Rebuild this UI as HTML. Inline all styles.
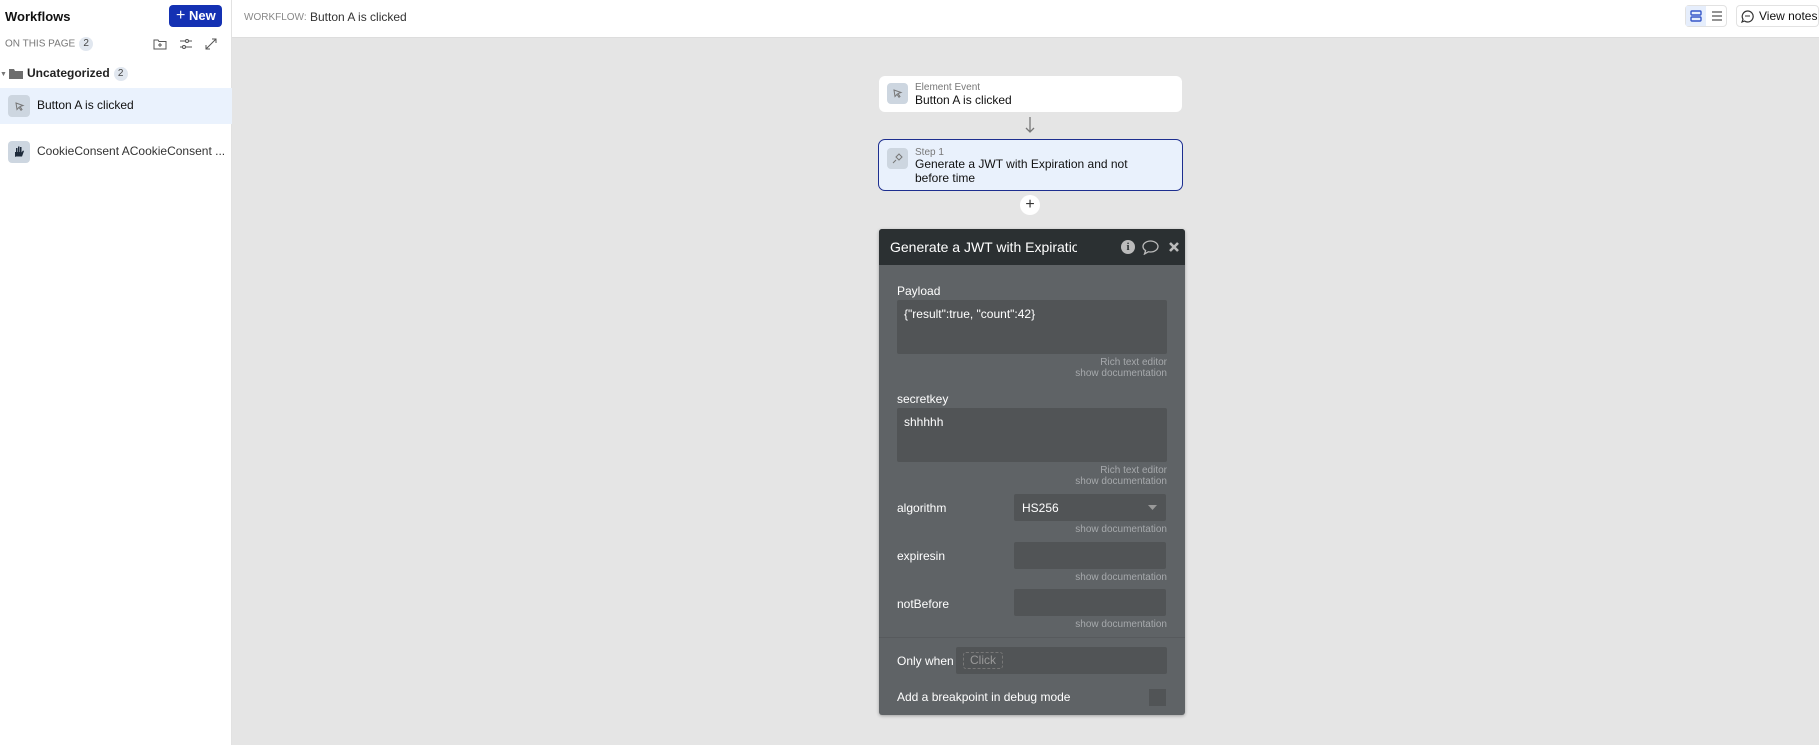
<!DOCTYPE html>
<html><head><meta charset="utf-8"><style>
*{box-sizing:border-box;margin:0;padding:0}
body{width:1819px;height:745px;overflow:hidden;font-family:"Liberation Sans",sans-serif;background:#e5e5e5;position:relative;color:#1a1a1a}
.a{position:absolute}
.side{left:0;top:0;width:232px;height:745px;background:#fff;border-right:1px solid #e2e2e2}
.top{left:232px;top:0;right:0;height:38px;background:#fff;border-bottom:1px solid #ddd}
.ib{background:#cdd6e0;border-radius:4px}
.lbl{color:#fff;font-size:12px}
.doc{color:#a6a9ac;font-size:10px;text-align:right;width:270px;left:897px}
.inp{background:#515456;border-radius:2px}
.bd{display:inline-block;width:14px;height:14px;border-radius:7px;background:#e1e7ef;font-size:10px;text-align:center;line-height:14px;color:#444;font-weight:normal;margin-left:4px;vertical-align:middle}
</style></head><body>
<div class="a side"></div>
<div class="a top"></div>
<div class="a" style="left:5px;top:9px;font-size:13px;font-weight:bold;color:#111">Workflows</div>
<div class="a" style="left:169px;top:5px;width:53px;height:22px;background:#1431b3;border-radius:4px;color:#fff;font-size:13px;font-weight:bold;line-height:22px;padding-left:7px"><span style="font-weight:normal;font-size:16px">+</span> New</div>
<div class="a" style="left:5px;top:37px;font-size:10px;color:#777;line-height:14px">ON THIS PAGE<span class="bd">2</span></div>
<svg class="a" style="left:153px;top:38px" width="14" height="12"><path d="M1 2h4l1 1.5h7V11H1z" fill="none" stroke="#555"/><path d="M7 5v4M5 7h4" stroke="#555"/></svg>
<svg class="a" style="left:179px;top:38px" width="14" height="12"><path d="M1 3h12M1 9h12" stroke="#555"/><circle cx="8" cy="3" r="1.5" fill="#fff" stroke="#555"/><circle cx="5" cy="9" r="1.5" fill="#fff" stroke="#555"/></svg>
<svg class="a" style="left:205px;top:38px" width="12" height="12"><path d="M1 11L11 1M7 1h4v4M1 7v4h4" fill="none" stroke="#555"/></svg>
<div class="a" style="left:0;top:71px;font-size:7px;color:#777">▼</div>
<svg class="a" style="left:9px;top:68px" width="15" height="12"><path d="M0 1h5l1 2h8v8H0z" fill="#6e6e6e"/></svg>
<div class="a" style="left:27px;top:66px;font-size:12px;font-weight:bold;color:#222;line-height:14px">Uncategorized<span class="bd">2</span></div>
<div class="a" style="left:0;top:88px;width:232px;height:36px;background:#eaf2fd"></div>
<div class="a ib" style="left:8px;top:95px;width:22px;height:22px"><svg width="22" height="22"><path d="M8 8l7 2.5-3 1 2 3-1 .8-2-3-2 2.2z" fill="none" stroke="#777"/></svg></div>
<div class="a" style="left:37px;top:98px;font-size:12px;color:#111">Button A is clicked</div>
<div class="a ib" style="left:8px;top:141px;width:22px;height:22px"><svg width="22" height="22"><path d="M7 16v-5h1V7h1.5v4h.5V5.5h1.5V11h.5V6h1.5v5.5l1.5-2 1 .5-2 5.5H8z" fill="#1e2a3a"/></svg></div>
<div class="a" style="left:37px;top:144px;font-size:12px;color:#333">CookieConsent ACookieConsent ...</div>
<div class="a" style="left:244px;top:11px;font-size:10px;color:#888;line-height:14px">WORKFLOW:</div>
<div class="a" style="left:310px;top:9px;font-size:12px;color:#333;line-height:16px">Button A is clicked</div>
<div class="a" style="left:1685px;top:5px;width:42px;height:22px;border:1px solid #e2e2e2;border-radius:4px"></div>
<div class="a" style="left:1686px;top:6px;width:20px;height:20px;background:#e6eefc"></div>
<svg class="a" style="left:1690px;top:10px" width="12" height="12"><rect x="1" y="1" width="10" height="4" rx="1" fill="none" stroke="#3657c9" stroke-width="1.4"/><rect x="1" y="7" width="10" height="4" rx="1" fill="none" stroke="#3657c9" stroke-width="1.4"/></svg>
<svg class="a" style="left:1711px;top:10px" width="12" height="12"><path d="M1 2h10M1 6h10M1 10h10" stroke="#555" stroke-width="1.2"/></svg>
<div class="a" style="left:1736px;top:5px;width:83px;height:22px;border:1px solid #e2e2e2;border-radius:4px;font-size:12px;line-height:20px;padding-left:22px;color:#111;white-space:nowrap">View notes</div>
<svg class="a" style="left:1741px;top:10px" width="13" height="13"><path d="M6.5 1a5.5 5.5 0 1 1-3 10L1 12l1-2.7A5.5 5.5 0 0 1 6.5 1z" fill="none" stroke="#333" stroke-width="1.2"/><path d="M4 6h5" stroke="#333"/></svg>

<div class="a" style="left:879px;top:76px;width:303px;height:36px;background:#fff;border-radius:6px"></div>
<div class="a ib" style="left:887px;top:83px;width:21px;height:21px"><svg width="21" height="21"><path d="M7 7l7 2.5-3 1 2 3-1 .8-2-3-2 2.2z" fill="none" stroke="#777"/></svg></div>
<div class="a" style="left:915px;top:82px;font-size:10px;color:#777">Element Event</div>
<div class="a" style="left:915px;top:93px;font-size:12px;color:#111">Button A is clicked</div>
<svg class="a" style="left:1024px;top:117px" width="12" height="18"><path d="M6 0v15M2 11l4 4 4-4" fill="none" stroke="#777" stroke-width="1.3"/></svg>
<div class="a" style="left:878px;top:139px;width:305px;height:52px;background:#e9f1fc;border:1.5px solid #1d2e8f;border-radius:7px"></div>
<div class="a ib" style="left:887px;top:148px;width:21px;height:21px"><svg width="21" height="21"><path d="M6 15l3-3M9 9l3-3 3 3-3 3z" fill="none" stroke="#777"/></svg></div>
<div class="a" style="left:915px;top:147px;font-size:10px;color:#777">Step 1</div>
<div class="a" style="left:915px;top:157px;font-size:12px;color:#111;line-height:14px;width:230px">Generate a JWT with Expiration and not before time</div>
<div class="a" style="left:1020px;top:195px;width:20px;height:20px;border-radius:10px;background:#fff;text-align:center;line-height:19px;font-size:16px;color:#333">+</div>

<div class="a" style="left:879px;top:229px;width:306px;height:486px;background:#5f6366;border-radius:3px;box-shadow:0 1px 3px rgba(0,0,0,.3)"></div>
<div class="a" style="left:879px;top:229px;width:306px;height:36px;background:#2b3032;border-radius:3px 3px 0 0"></div>
<div class="a" style="left:890px;top:239px;font-size:14px;color:#fff;width:187px;overflow:hidden;white-space:nowrap">Generate a JWT with Expiration and</div>
<div class="a" style="left:1121px;top:240px;width:14px;height:14px;border-radius:7px;background:#bbb;color:#2b3032;font-size:11px;font-weight:bold;text-align:center;line-height:14px;font-family:'Liberation Serif',serif">i</div>
<svg class="a" style="left:1142px;top:240px" width="17" height="15"><path d="M8.5 1C4.4 1 1 3.5 1 6.5c0 1.7 1 3.1 2.6 4.1L2.5 14l3.8-2.2c.7.2 1.4.2 2.2.2 4.1 0 7.5-2.5 7.5-5.5S12.6 1 8.5 1z" fill="none" stroke="#bbb" stroke-width="1.3"/></svg>
<svg class="a" style="left:1168px;top:241px" width="12" height="12"><path d="M2 2l8 8M10 2l-8 8" stroke="#bbb" stroke-width="2.6"/></svg>

<div class="a lbl" style="left:897px;top:284px">Payload</div>
<div class="a inp" style="left:897px;top:300px;width:270px;height:54px"></div>
<div class="a lbl" style="left:904px;top:307px">{"result":true, "count":42}</div>
<div class="a doc" style="top:357px">Rich text editor</div>
<div class="a doc" style="top:368px">show documentation</div>
<div class="a lbl" style="left:897px;top:392px">secretkey</div>
<div class="a inp" style="left:897px;top:408px;width:270px;height:54px"></div>
<div class="a lbl" style="left:904px;top:415px">shhhhh</div>
<div class="a doc" style="top:465px">Rich text editor</div>
<div class="a doc" style="top:476px">show documentation</div>
<div class="a lbl" style="left:897px;top:501px">algorithm</div>
<div class="a inp" style="left:1014px;top:494px;width:152px;height:27px"></div>
<div class="a lbl" style="left:1022px;top:501px">HS256</div>
<svg class="a" style="left:1148px;top:505px" width="9" height="6"><path d="M0 0h9L4.5 5z" fill="#999"/></svg>
<div class="a doc" style="top:524px">show documentation</div>
<div class="a lbl" style="left:897px;top:549px">expiresin</div>
<div class="a inp" style="left:1014px;top:542px;width:152px;height:27px"></div>
<div class="a doc" style="top:572px">show documentation</div>
<div class="a lbl" style="left:897px;top:597px">notBefore</div>
<div class="a inp" style="left:1014px;top:589px;width:152px;height:27px"></div>
<div class="a doc" style="top:619px">show documentation</div>
<div class="a" style="left:879px;top:637px;width:306px;height:1px;background:#575a5d"></div>
<div class="a lbl" style="left:897px;top:654px">Only when</div>
<div class="a inp" style="left:956px;top:647px;width:211px;height:27px"></div>
<div class="a" style="left:963px;top:652px;width:40px;height:17px;border:1px dashed #777;border-radius:3px;color:#999;font-size:12px;text-align:center;line-height:15px">Click</div>
<div class="a lbl" style="left:897px;top:690px">Add a breakpoint in debug mode</div>
<div class="a" style="left:1149px;top:689px;width:17px;height:17px;background:#515456"></div>
</body></html>
